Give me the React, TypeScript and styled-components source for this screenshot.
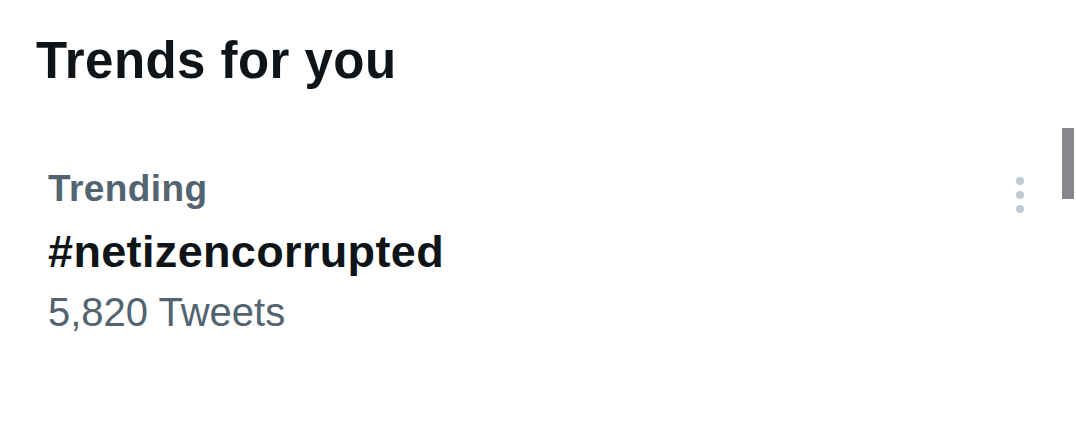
import React, { FC } from "react";
import styled, { createGlobalStyle } from "styled-components";

const GlobalStyle = createGlobalStyle`
    html, body {
        margin: 0;
        padding: 0;
        background: #ffffff;
    }
    body {
        font-family: "Liberation Sans", Arial, sans-serif;
        color: #0f1419;
    }
`

type Trend = {
    context: string
    name: string
    count: string
}

const trends: Trend[] = [
    { context: "Trending", name: "#netizencorrupted", count: "5,820 Tweets" },
]

const App: FC = () => {
    return (
        <>
            <GlobalStyle />
            <Wrapper>
                <Title>Trends for you</Title>
                {trends.map((t) => (
                    <TrendRow key={t.name}>
                        <TrendText>
                            <Context>{t.context}</Context>
                            <Name>{t.name}</Name>
                            <Count>{t.count}</Count>
                        </TrendText>
                        <MoreButton aria-label="More">
                            <svg width="20" height="40" viewBox="0 0 20 40">
                                <circle cx="10" cy="6" r="4" fill="#bfcad2" />
                                <circle cx="10" cy="20" r="4" fill="#bfcad2" />
                                <circle cx="10" cy="34" r="4" fill="#bfcad2" />
                            </svg>
                        </MoreButton>
                    </TrendRow>
                ))}
                <ScrollThumb />
            </Wrapper>
        </>
    )
}

const Wrapper = styled.div`
    position: relative;
    width: 1076px;
    height: 426px;
    overflow: hidden;
    background: #ffffff;
`

const Title = styled.h2`
    margin: 0;
    padding: 31px 0 0 36px;
    font-size: 51px;
    line-height: 60px;
    font-weight: 700;
    color: #0f1419;
    letter-spacing: 0.45px;
`

const TrendRow = styled.div`
    display: flex;
    justify-content: space-between;
    align-items: flex-start;
    padding: 76px 46px 0 48px;
`

const TrendText = styled.div`
    display: flex;
    flex-direction: column;
`

const Context = styled.span`
    font-size: 37px;
    line-height: 44px;
    font-weight: 700;
    color: #536471;
    letter-spacing: 0.4px;
`

const Name = styled.span`
    margin-top: 15px;
    font-size: 45px;
    line-height: 52px;
    font-weight: 700;
    color: #0f1419;
    letter-spacing: 0.35px;
`

const Count = styled.span`
    margin-top: 10px;
    font-size: 40px;
    line-height: 48px;
    color: #536471;
`

const MoreButton = styled.div`
    margin-top: 8px;
    width: 20px;
    height: 40px;
    display: flex;
`

const ScrollThumb = styled.div`
    position: absolute;
    top: 128px;
    right: 2px;
    width: 12px;
    height: 71px;
    background: #87888c;
`

export default App
